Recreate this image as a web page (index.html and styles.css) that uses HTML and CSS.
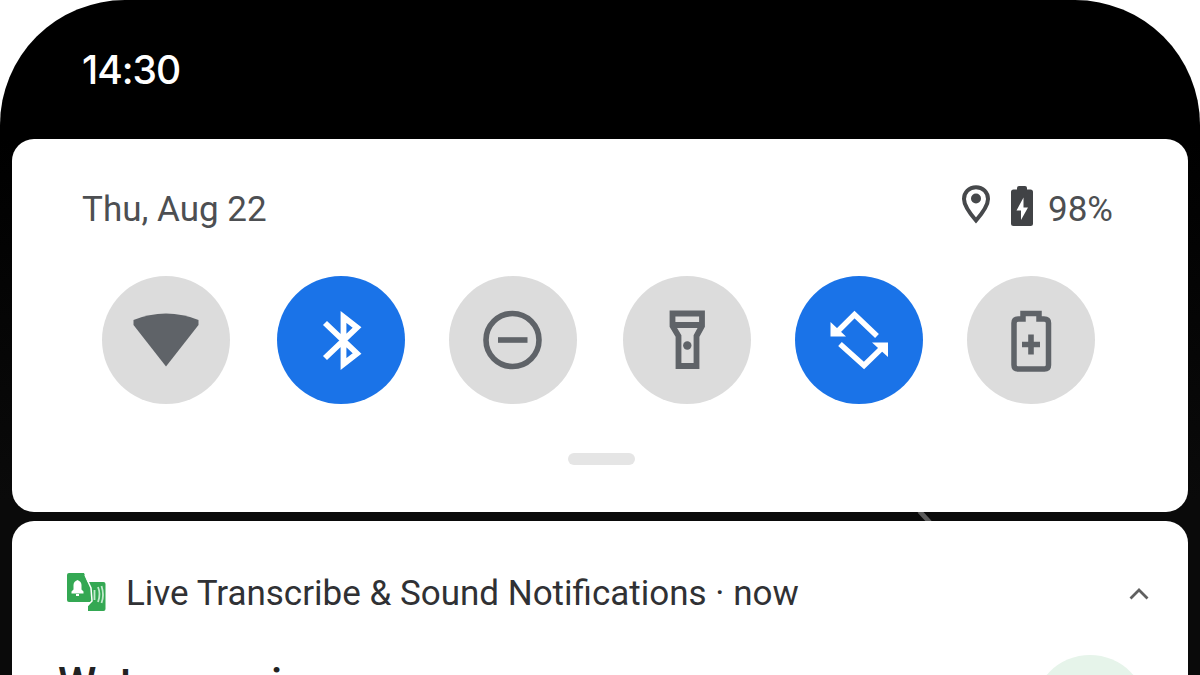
FILE: index.html
```
<!DOCTYPE html>
<html lang="en">
<head>
<meta charset="utf-8">
<title>Quick settings</title>
<link rel="stylesheet" href="styles.css">
</head>
<body>
<main class="phone">
  <header class="status"><span class="clock">14:30</span></header>
  <section class="quick">
    <div class="info">
      <span class="date">Thu, Aug 22</span>
      <div class="indicators">
        <svg class="pin" viewBox="0 0 30 40"><path d="M15 3.200C8 3.200 3 8.400 3 15 3 21.800 8.500 29 15 36.500 21.500 29 27 21.800 27 15 27 8.400 22 3.200 15 3.200Z" fill="none" stroke="#46484b" stroke-width="4"/><circle cx="15" cy="14.500" r="5" fill="#46484b"/></svg>
        <svg class="charge" viewBox="0 0 22 40"><path d="M6 3.500V2q0-2 2-2h6q2 0 2 2v1.500h3.500q2.500 0 2.500 2.500v31.500q0 2.500-2.500 2.500h-17Q0 40 0 37.500V6q0-2.500 2.500-2.500Z" fill="#414346"/><path d="M12.500 11.500 5.500 24.500H10v9.500l7-12.500h-4.500Z" fill="#fff"/></svg>
        <span class="level">98%</span>
      </div>
    </div>
    <div class="tiles">
      <div class="tile"><svg viewBox="0 0 128 128"><path d="M31.500 44Q47 37.500 64 37.500T96.500 44V49L64 90.500 31.500 49Z" fill="#5f6368"/></svg></div>
      <div class="tile on"><svg viewBox="0 0 128 128"><path d="M48 47 80 77.500 66.500 88V41L80 51.500 48 82" fill="none" stroke="#fff" stroke-width="5.800"/></svg></div>
      <div class="tile"><svg viewBox="0 0 128 128"><g fill="none" stroke="#5f6368" stroke-width="5.600"><circle cx="63.500" cy="64" r="26.500"/><path d="M49 64H78.500"/></g></svg></div>
      <div class="tile"><svg viewBox="0 0 128 128"><path d="M49.500 37.500H79V50L73.500 60V90H55.500V60L49.500 50ZM49.500 49H79" fill="none" stroke="#5f6368" stroke-width="5.800"/><circle cx="64.300" cy="69.500" r="4.200" fill="#5f6368"/></svg></div>
      <div class="tile on"><svg viewBox="0 0 128 128"><path d="M41 57 59.500 38.500 82 60M45 68 69 89.500 88 71" fill="none" stroke="#fff" stroke-width="5.500"/><path d="M35.500 46V60.500H51ZM93 81V66.500H77Z" fill="#fff"/></svg></div>
      <div class="tile"><svg viewBox="0 0 128 128"><path d="M56 43V37.500H72V43H77Q81.500 43 81.500 47V89Q81.500 93 77.500 93H51Q47 93 47 89V47Q47 43 51.500 43Z" fill="none" stroke="#5f6368" stroke-width="5.500"/><path d="M55 68.500H73M64 58.500V78.500" stroke="#5f6368" stroke-width="5.600"/></svg></div>
    </div>
    <div class="handle"></div>
  </section>
  <div class="gap"><svg viewBox="0 0 20 9"><path d="M3-1 14 11" stroke="#5c5c5c" stroke-width="5"/></svg></div>
  <section class="notice">
    <div class="head">
      <svg class="app" viewBox="0 0 39 38"><path d="M2 0H17L23 15V29H2Q0 29 0 27V2Q0 0 2 0Z" fill="#34a853"/><path d="M20 9H36.500q2 0 2 2V36q0 2-2 2H21V33L24 29H17Z" fill="#34a853"/><path d="M18 2 24 15 25 28 20 33" fill="none" stroke="#fff" stroke-width="1.500"/><path d="M4.500 20.500v-2l2-2v-4.500q0-3.500 4-5 4 1.500 4 5v4.500l2 2v2ZM9 21h3v2H9Z" fill="#fff"/><path d="M27.500 17v10M31 14q3 7 0 15M34.500 13q3 9 0 17" fill="none" stroke="#c3e9cd" stroke-width="1.800"/></svg>
      <span class="name">Live Transcribe &amp; Sound Notifications · now</span>
      <svg class="chevron" viewBox="0 0 20 12"><path d="M1.500 10.500 10 2 18.500 10.500" fill="none" stroke="#606060" stroke-width="2.800"/></svg>
    </div>
    <div class="message">
      <strong class="title">Water running</strong>
      <div class="badge"></div>
    </div>
  </section>
</main>
</body>
</html>
```
FILE: styles.css
```
* { box-sizing: border-box; }
body { margin: 0; background: #fff; font-family: Roboto, sans-serif; overflow: hidden; }
svg { display: block; }
.phone {
  width: 1200px; height: 675px; padding: 0 12px; overflow: hidden;
  background: linear-gradient(#000 139px, #0a0a0a 500px);
  border-radius: 125px 125px 0 0;
}
.status { height: 139px; padding: 49px 0 0 70px; }
.clock { display: block; color: #fff; font-family: Inter, Roboto, sans-serif; font-size: 39px; line-height: 42px; font-weight: 500; letter-spacing: -1px; white-space: nowrap; }
.quick { height: 373px; padding: 45px 0 0; background: #fff; border-radius: 22px; }
.info { display: flex; justify-content: space-between; height: 50px; padding: 0 75px 0 70px; color: #4d4f52; }
.date { font-size: 35px; line-height: 51px; }
.indicators { display: flex; align-items: flex-start; }
.pin { width: 30px; height: 40px; margin-right: 20px; }
.charge { width: 22px; height: 40px; margin: 2px 15px 0 0; }
.level { font-size: 35px; line-height: 51px; }
.tiles { display: grid; grid-template-columns: 174.5px 172px 174.5px 172px 172px 128px; margin: 42px 0 0 90px; }
.tile { width: 128px; height: 128px; border-radius: 50%; background: #dcdcdc; }
.tile.on { background: #1a73e8; }
.handle { width: 67px; height: 12px; margin: 49px 0 0 556px; border-radius: 6px; background: #e5e5e5; }
.gap { height: 8.5px; padding-left: 904px; }
.gap svg { width: 20px; height: 8.5px; }
.notice { height: 200px; padding-top: 52px; background: #fff; border-radius: 22px 22px 0 0; }
.head { display: flex; align-items: flex-start; padding: 0 39px 0 55px; }
.app { width: 39px; height: 38px; margin-right: 20px; }
.name { color: #303134; font-size: 35px; line-height: 42px; white-space: nowrap; }
.chevron { width: 20px; height: 12px; margin: 15px 0 0 auto; }
.message { display: flex; justify-content: space-between; padding: 40px 41px 0 46px; }
.title { margin-top: 5px; color: #222; font-size: 43.5px; line-height: 50px; font-weight: 500; }
.badge { width: 114px; height: 114px; border-radius: 50%; background: #e6f4ea; }
```
